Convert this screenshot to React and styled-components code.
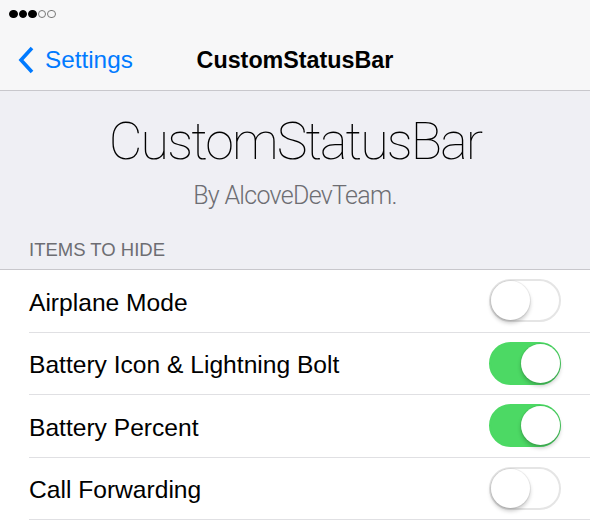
import React from 'react'
import styled, { createGlobalStyle } from 'styled-components'

const GlobalStyle = createGlobalStyle`
  html, body {
    margin: 0;
    padding: 0;
    background: #ffffff;
  }
  body {
    font-family: 'Liberation Sans', Arial, sans-serif;
    -webkit-font-smoothing: antialiased;
  }
`

const Screen = styled.div`
  width: 590px;
  height: 524px;
  overflow: hidden;
  background: #ffffff;
`

// Top chrome
const Chrome = styled.header`
  background: #f7f7f8;
  border-bottom: 1px solid #c8c7cc;
`

const StatusBar = styled.div`
  height: 28px;
  display: flex;
  align-items: center;
  gap: 1px;
  padding-left: 9px;
`

const Dot = styled.span`
  width: 8.5px;
  height: 8.5px;
  border-radius: 50%;
  box-sizing: border-box;
  background: ${(p) => (p.$filled ? '#000' : 'transparent')};
  border: 1px solid ${(p) => (p.$filled ? '#000' : '#777')};
`

const NavBar = styled.nav`
  height: 62px;
  display: grid;
  grid-template-columns: 1fr auto 1fr;
  align-items: center;
`

const BackButton = styled.div`
  display: flex;
  align-items: center;
  gap: 10px;
  padding-left: 17px;
  color: #007aff;
  font-size: 24.3px;
  padding-top: 2px;
`

const NavTitle = styled.div`
  font-size: 23.3px;
  font-weight: 700;
  color: #000;
  padding-top: 2px;
`

// Header section
const Hero = styled.section`
  background: #efeff4;
  height: 179px;
  display: flex;
  flex-direction: column;
  align-items: center;
  border-bottom: 1px solid #c8c7cc;
  box-sizing: border-box;
`

const HeroTitle = styled.h1`
  margin: 21px 0 0;
  font-family: Roboto, 'Liberation Sans', sans-serif;
  font-weight: 100;
  font-size: 52px;
  letter-spacing: -1.9px;
  line-height: 60px;
  color: #000;
`

const HeroSub = styled.div`
  margin-top: 9px;
  font-family: Roboto, 'Liberation Sans', sans-serif;
  font-weight: 300;
  font-size: 25px;
  letter-spacing: -0.7px;
  color: #6d6d72;
`

const SectionLabel = styled.div`
  align-self: stretch;
  margin-top: auto;
  padding: 0 0 8px 29px;
  font-size: 18.5px;
  color: #6d6d72;
`

// Table
const List = styled.ul`
  list-style: none;
  margin: 0;
  padding: 0 0 0 29px;
  background: #fff;
`

const Row = styled.li`
  height: 62.5px;
  box-sizing: border-box;
  display: flex;
  align-items: center;
  justify-content: space-between;
  padding-right: 29px;
  border-bottom: 1px solid #e0e0e3;
  font-size: 24.6px;
  color: #000;
`

const Label = styled.span`
  padding-top: 4px;
`

const Switch = styled.span`
  position: relative;
  width: 72px;
  height: 43px;
  box-sizing: border-box;
  border-radius: 22px;
  background: ${(p) => (p.$on ? '#4cd964' : '#fff')};
  border: 2px solid ${(p) => (p.$on ? '#4cd964' : '#e5e5e5')};
`

const Knob = styled.span`
  position: absolute;
  top: 0;
  left: ${(p) => (p.$on ? '30px' : '0')};
  width: 39px;
  height: 39px;
  border-radius: 50%;
  background: #fff;
  box-shadow: 0 3px 4px rgba(0, 0, 0, 0.22), 0 0 0 1px rgba(0, 0, 0, 0.06);
`

const items = [
  { label: 'Airplane Mode', on: false },
  { label: 'Battery Icon & Lightning Bolt', on: true },
  { label: 'Battery Percent', on: true },
  { label: 'Call Forwarding', on: false },
]

const Chevron = () => (
  <svg width="18" height="28" viewBox="0 0 18 28">
    <polyline points="15,2 4,14 15,26" fill="none" stroke="#007aff" strokeWidth="3.6" strokeLinecap="butt" strokeLinejoin="miter" />
  </svg>
)

const App = () => (
  <Screen>
    <GlobalStyle />
    <Chrome>
      <StatusBar>
        {[1, 1, 1, 0, 0].map((f, i) => (
          <Dot key={i} $filled={!!f} />
        ))}
      </StatusBar>
      <NavBar>
        <BackButton>
          <Chevron />
          Settings
        </BackButton>
        <NavTitle>CustomStatusBar</NavTitle>
        <div />
      </NavBar>
    </Chrome>
    <Hero>
      <HeroTitle>CustomStatusBar</HeroTitle>
      <HeroSub>By AlcoveDevTeam.</HeroSub>
      <SectionLabel>ITEMS TO HIDE</SectionLabel>
    </Hero>
    <List>
      {items.map((it) => (
        <Row key={it.label}>
          <Label>{it.label}</Label>
          <Switch $on={it.on}>
            <Knob $on={it.on} />
          </Switch>
        </Row>
      ))}
    </List>
  </Screen>
)

export default App
